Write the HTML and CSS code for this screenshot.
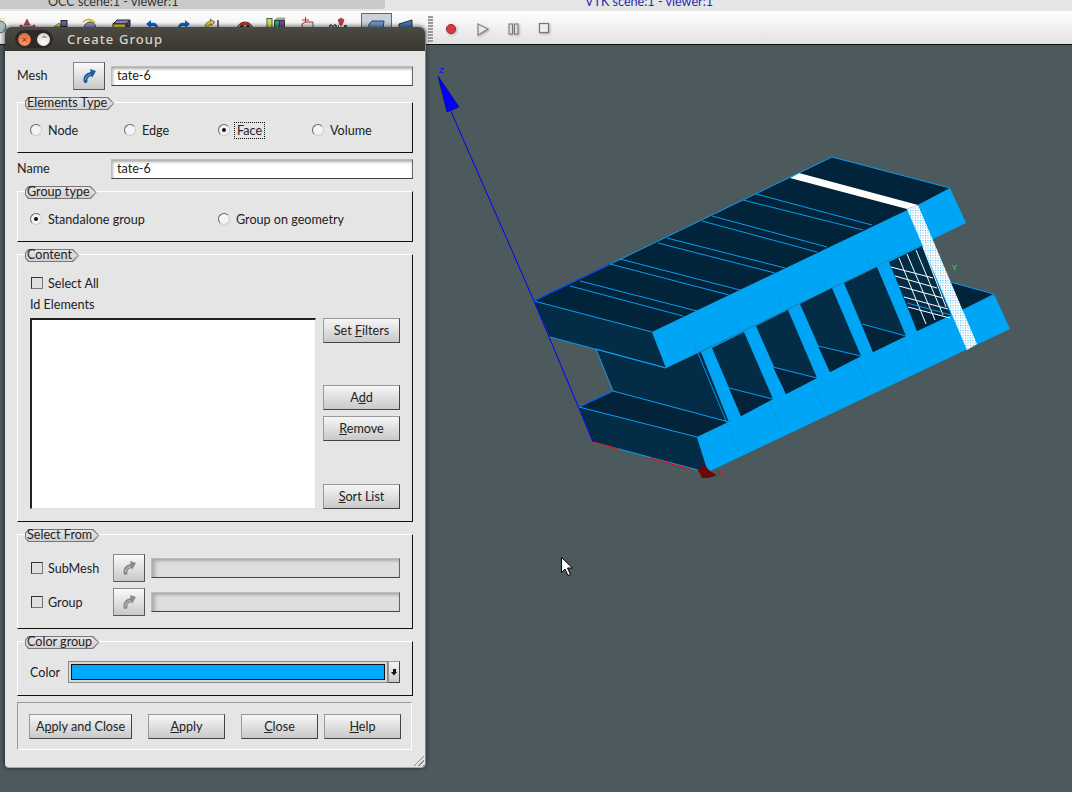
FILE: index.html
```html
<!DOCTYPE html>
<html>
<head>
	<meta charset="UTF-8">
	<title>Create Group</title>
	<link rel="stylesheet" href="styles.css">
</head>
<body>
	<div class="app">
		<div class="tabs">
			<div class="tab-occ">OCC scene:1 - viewer:1</div>
			<div class="tab-vtk">VTK scene:1 - viewer:1</div>
		</div>
		<div class="toolbar">
			<svg class="tools-left" width="425" height="33" viewBox="0 11 425 33">
				<rect x="361.500" y="13.500" width="30" height="31" fill="#c9d1d9" stroke="#666"/>
				<path d="M0 19h5v2" fill="none" stroke="#e8e020" stroke-dasharray="2 1"/>
				<circle cx="0" cy="27" r="6" fill="#a8bcc0" stroke="#556"/>
				<path d="M24 25l3-6 3 6z" fill="#c83a40" stroke="#733" stroke-width=".6"/>
				<path d="M22 26h10l3 3H20z" fill="#a0a0a8" stroke="#666" stroke-width=".6"/>
				<circle cx="21" cy="26" r="1.500" fill="#c83a40"/>
				<circle cx="34" cy="26" r="1.500" fill="#c83a40"/>
				<path d="M54 27l5-4 3 4z" fill="#e0cc20" stroke="#444" stroke-width=".6"/>
				<rect x="61" y="20.500" width="6" height="6" fill="#56708c" stroke="#223"/>
				<circle cx="90" cy="28" r="6" fill="#9a8fc0" stroke="#445"/>
				<path d="M83 22c4-4 9-3 12 1" fill="none" stroke="#d8c030" stroke-width="2"/>
				<path d="M113 24l4-4h13l-4 4z" fill="#8a80b8" stroke="#223"/>
				<rect x="113" y="24" width="13" height="6" fill="#e6d820" stroke="#223"/>
				<path d="M126 24l4-4v6l-4 4z" fill="#4a4a70" stroke="#223"/>
				<path d="M158 28c0-4-3-6-7-5v-3l-5 4 5 4v-2c3 0 5 0 5 2z" fill="#0a64c8"/>
				<path d="M178 28c0-4 3-6 7-5v-3l5 4-5 4v-2c-3 0-5 0-5 2z" fill="#0a64c8"/>
				<path d="M205 28c0-4 2-7 6-7l-1-2 5 3-4 4v-2c-2 0-3 2-3 4z" fill="#e0c820" stroke="#333" stroke-width=".6"/>
				<path d="M218 20v8h6" fill="none" stroke="#222" stroke-width="1.300"/>
				<circle cx="245" cy="30" r="8" fill="#aaa" stroke="#333"/>
				<path d="M239 25a8 8 0 0 1 12 0z" fill="#c03028"/>
				<circle cx="242" cy="27" r="2" fill="#222"/>
				<circle cx="248" cy="27" r="2" fill="#222"/>
				<rect x="267" y="18.500" width="5" height="10" fill="#d8d870" stroke="#3a6a3a"/>
				<rect x="274.500" y="20.500" width="5" height="8" fill="#30a070" stroke="#333"/>
				<rect x="279.500" y="20.500" width="5" height="8" fill="#7a40a8" stroke="#333"/>
				<path d="M275 20l2-2h8l-1 2z" fill="#a8c8a0" stroke="#555" stroke-width=".5"/>
				<path d="M305.500 17v8M302 20h7" stroke="#d82020" fill="none"/>
				<path d="M302 24l3-2h8v6h-11z" fill="#e8e4e4" stroke="#844"/>
				<path d="M329 26h10M331 24v4M335 24v4" stroke="#245" fill="none" stroke-width="1.300" stroke-dasharray="2 1"/>
				<path d="M338 20l3-2 3 2-2 5h-2z" fill="#c83838" stroke="#622" stroke-width=".6"/>
				<path d="M344 25h3v3h-3z" fill="#456"/>
				<path d="M369 24l3-3h12l-1 8h-14z" fill="#6a98c4" stroke="#345"/>
				<path d="M399 24l13-4v7l-13 3z" fill="#4678ac" stroke="#234"/>
			</svg>
			<div class="handle"></div>
			<svg class="tools-right" width="120" height="33" viewBox="437 11 120 33">
				<circle cx="451" cy="29" r="4.600" fill="#d83a40" stroke="#933"/>
				<path d="M478 24l10 5-10 6z" fill="#e8e8e8" stroke="#888" stroke-width="1.300"/>
				<rect x="509" y="24" width="3.500" height="10" fill="#ddd" stroke="#777"/>
				<rect x="514.500" y="24" width="3.500" height="10" fill="#ddd" stroke="#777"/>
				<rect x="539.500" y="23.500" width="9" height="9" fill="#eee" stroke="#777" stroke-width="1.200"/>
			</svg>
		</div>
		<div class="viewer">
			<svg class="scene" width="1072" height="747" viewBox="0 45 1072 747">
				<defs>
					<pattern id="dots" width="2.500" height="2.500" patternUnits="userSpaceOnUse">
						<rect width="2.500" height="2.500" fill="#fff"/>
						<rect width="1" height="1" fill="#3ab4f5"/>
					</pattern>
				</defs>
				<!-- lower flange -->
				<polygon points="579,407 697,437 708,472 593,442" fill="#032c46"/>
				<polygon points="579,407 613,391 729,422 697,437" fill="#02233a"/>
				<polygon points="950,282 994,294 962,310" fill="#01243a"/>
				<!-- web -->
				<polygon points="596,349 666,368 701,352 729,422 613,391" fill="#032c46"/>
				<!-- upper flange -->
				<polygon points="534,301 832,157 950,188 918,205 652,332" fill="#01243a"/>
				<polygon points="534,301 652,332 666,368 550,337" fill="#032c46"/>
				<!-- bright side with the windows -->
				<polygon points="652,332 918,205 950,188 966,223 666,368" fill="#00a6f5"/>
				<polygon points="697,437 962,310 994,294 1010,329 708,472" fill="#00a6f5"/>
				<polygon points="701,352 925,243 955,318 729,422" fill="#00a6f5"/>
				<!-- rib shading, the windows cover most of it -->
				<g stroke="#0098ea" fill="none">
					<path d="M692 339l47 113M735 319l47 113M778 298l47 113M822 277l47 113M866 256l47 113"/>
				</g>
				<polygon points="712,348 744,332 773,399 741,416" fill="#032c46"/>
				<polygon points="729,388 773,399 741,416" fill="#02233a"/>
				<polygon points="756,326 788,310 817,378 786,394" fill="#032c46"/>
				<polygon points="773,367 817,378 786,394" fill="#02233a"/>
				<polygon points="800,304 832,288 861,356 830,372" fill="#032c46"/>
				<polygon points="818,346 861,356 830,372" fill="#02233a"/>
				<polygon points="844,283 877,267 906,336 873,352" fill="#032c46"/>
				<polygon points="862,324 906,336 873,352" fill="#02233a"/>
				<polygon points="889,262 922,246 951,315 917,331" fill="#032c46"/>
				<polygon points="907,303 951,315 917,331" fill="#02233a"/>
				<!-- mesh lines on the selected faces -->
				<g stroke="#fff" fill="none">
					<path d="M891 267l42 11M895 276l42 12M899 286l44 12M904 297l44 12M908 307l42 11"/>
					<path d="M899 258l27 66M907 254l28 66M916 250l27 65M923 247l23 60"/>
				</g>
				<polygon points="790,178 799,173 918,205 907,209" fill="#fff"/>
				<polygon points="907,209 918,205 977,344 967,350" fill="url(#dots)"/>
				<!-- thin edges -->
				<g stroke="#0a9cf0" fill="none">
					<path d="M534 301L652 332M550 337L666 368M596 349L666 368M596 349L613 391M613 391L729 422M579 407L697 437M593 442L697 470M579 407L613 391"/>
					<path d="M832 157L950 188M832 157L534 301"/>
					<path d="M570 286L683 316M580 281L697 311M610 264L729 295M620 259L740 290M658 243L775 273M667 238L785 268M702 221L817 252M712 216L827 247M743 200L863 230M756 194L872 225"/>
					<path d="M729 388L773 399M773 367L817 378M818 346L861 356M862 324L906 336"/>
					<path d="M950 282L994 294M907 303L951 315"/>
				</g>
				<!-- axes -->
				<g fill="none">
					<path d="M446 100L534 301L593 442" stroke="#0000ff"/>
					<path d="M534 301L610 264" stroke="#0030ff"/>
					<path d="M579 407L613 391" stroke="#0050ff"/>
					<path d="M593 442L618 449M650 458L690 469" stroke="#ff0000"/>
					<path d="M947 272l2-1" stroke="#00a000"/>
				</g>
				<polygon points="438,76 459,107 447,112" fill="#0000ff" stroke="#000080" stroke-width=".6"/>
				<text class="axis-label" x="439" y="73" fill="#0000ff">Z</text>
				<path d="M698 470l6-5 6 6 7 4-8 3h-7z" fill="#6c0808"/>
				<text class="axis-label" x="718" y="476" fill="#ff0000">X</text>
				<text class="axis-label" x="952" y="270" fill="#00ff00">Y</text>
				<!-- mouse pointer -->
				<path d="M561.500 557.500v15l3.500-3.500 3 6.500 2.500-1-3-6.500h5z" fill="#fff" stroke="#000"/>
			</svg>
		</div>

		<div class="dialog">
			<div class="titlebar">
				<div class="win-buttons">
					<span class="win-close">×</span>
					<span class="win-shade">⌃</span>
				</div>
				<div class="title">Create Group</div>
			</div>
			<div class="content">
				<div class="mesh-row">
					<span class="field-label">Mesh</span>
					<button class="icon-btn">
						<svg width="16" height="16" viewBox="0 0 16 16"><path d="M4.500 13C4 9.500 6 7 10 6" fill="none" stroke="#1f5a99" stroke-width="4" stroke-linecap="round"/><path d="M9 1l6 2-4 7z" fill="#1f5a99"/><path d="M4.500 12C4.500 9.500 6 7.500 9.500 6.500" fill="none" stroke="#6ab0ee"/></svg>
					</button>
					<div class="text-input">tate-6</div>
				</div>

				<div class="frame frame-type">
					<span class="tag">Elements Type</span>
					<div class="radio-row four">
						<label class="opt"><i class="radio"></i>Node</label>
						<label class="opt"><i class="radio"></i>Edge</label>
						<label class="opt"><i class="radio on"></i><span class="focused">Face</span></label>
						<label class="opt"><i class="radio"></i>Volume</label>
					</div>
				</div>

				<div class="name-row">
					<span class="field-label">Name</span>
					<div class="text-input">tate-6</div>
				</div>

				<div class="frame frame-group">
					<span class="tag">Group type</span>
					<div class="radio-row two">
						<label class="opt"><i class="radio on"></i>Standalone group</label>
						<label class="opt"><i class="radio"></i>Group on geometry</label>
					</div>
				</div>

				<div class="frame frame-content">
					<span class="tag">Content</span>
					<label class="opt"><i class="check"></i>Select All</label>
					<div class="id-label">Id Elements</div>
					<div class="list-area">
						<div class="list-box"></div>
						<div class="list-buttons">
							<button class="btn">Set <u>F</u>ilters</button>
							<button class="btn btn-add">A<u>d</u>d</button>
							<button class="btn btn-remove"><u>R</u>emove</button>
							<button class="btn btn-sort"><u>S</u>ort List</button>
						</div>
					</div>
				</div>

				<div class="frame frame-select">
					<span class="tag">Select From</span>
					<div class="select-row">
						<label class="opt"><i class="check"></i>SubMesh</label>
						<button class="icon-btn off">
							<svg width="16" height="16" viewBox="0 0 16 16"><path d="M4.500 13C4 9.500 6 7 10 6" fill="none" stroke="#8a8a8a" stroke-width="4" stroke-linecap="round"/><path d="M9 1l6 2-4 7z" fill="#8a8a8a"/><path d="M4.500 12C4.500 9.500 6 7.500 9.500 6.500" fill="none" stroke="#ccc"/></svg>
						</button>
						<div class="text-input off"></div>
					</div>
					<div class="select-row">
						<label class="opt"><i class="check"></i>Group</label>
						<button class="icon-btn off">
							<svg width="16" height="16" viewBox="0 0 16 16"><path d="M4.500 13C4 9.500 6 7 10 6" fill="none" stroke="#8a8a8a" stroke-width="4" stroke-linecap="round"/><path d="M9 1l6 2-4 7z" fill="#8a8a8a"/><path d="M4.500 12C4.500 9.500 6 7.500 9.500 6.500" fill="none" stroke="#ccc"/></svg>
						</button>
						<div class="text-input off"></div>
					</div>
				</div>

				<div class="frame frame-color">
					<span class="tag">Color group</span>
					<div class="color-row">
						<span class="color-label">Color</span>
						<div class="color-box"><div class="color-fill"></div></div>
						<div class="color-arrow"></div>
					</div>
				</div>

				<div class="footer">
					<button class="btn btn-wide">A<u>p</u>ply and Close</button>
					<button class="btn btn-apply"><u>A</u>pply</button>
					<button class="btn btn-close"><u>C</u>lose</button>
					<button class="btn btn-help"><u>H</u>elp</button>
				</div>
			</div>
			<div class="grip"></div>
		</div>
	</div>
</body>
</html>
```

FILE: styles.css
```css
* {
	margin: 0;
	padding: 0;
	box-sizing: border-box;
}

body {
	background: #4c5a5e;
	font-family: "Lato", "Liberation Sans", sans-serif;
	font-size: 12.6px;
	color: #222;
	overflow: hidden;
}

.app {
	position: relative;
	width: 1072px;
	height: 792px;
	display: flex;
	flex-direction: column;
}

/* top of the main window */
.tabs {
	height: 11px;
	display: flex;
	background: #e6e6e6;
	overflow: hidden;
}

.tab-occ {
	width: 385px;
	height: 9px;
	padding-left: 48px;
	background: #c9c9c9;
	border-radius: 0 0 3px 0;
	line-height: 4px;
	color: #333;
}

.tab-vtk {
	padding-left: 200px;
	line-height: 4px;
	color: #2c2ca8;
}

.toolbar {
	height: 34px;
	display: flex;
	align-items: flex-start;
	background: linear-gradient(#fff, #e2e2e2);
	border-bottom: 1px solid #111;
}

.handle {
	width: 5px;
	height: 26px;
	margin: 5px 0 0 3px;
	background: repeating-linear-gradient(#999 0 2px, #eee 2px 3px);
}

.tools-right {
	margin-left: 4px;
	filter: drop-shadow(1px 1px 1px #aaa);
}

.viewer {
	flex: 1;
	background: #4c5a5e;
}

.scene {
	display: block;
}

.axis-label {
	font-family: "Liberation Sans", sans-serif;
	font-size: 8px;
}

/* dialog */
.dialog {
	position: absolute;
	left: 5px;
	top: 27px;
	width: 420px;
	height: 740px;
	display: flex;
	flex-direction: column;
	background: #e5e5e5;
	border-radius: 6px 6px 4px 4px;
	box-shadow: 1px 0 0 #8a8672, 0 1px 0 #b0aa90, 0 0 4px 1px rgba(0, 0, 0, .55);
}

.titlebar {
	height: 24px;
	display: flex;
	align-items: center;
	background: linear-gradient(#4c4a44, #38362f);
	border-radius: 6px 6px 0 0;
}

.win-buttons {
	width: 38px;
	height: 18px;
	margin-left: 10px;
	display: flex;
	align-items: center;
	justify-content: space-between;
	padding: 0 3px;
	background: #2b2a26;
	border-radius: 9px;
}

.win-close, .win-shade {
	width: 13px;
	height: 13px;
	border-radius: 50%;
	text-align: center;
	line-height: 12px;
	font-size: 10px;
	color: #6b3018;
}

.win-close {
	background: radial-gradient(circle at 50% 70%, #ff9a6a, #e0592a);
}

.win-shade {
	background: radial-gradient(circle at 50% 70%, #fff, #cfcbc0);
	color: #666;
}

.title {
	margin-left: 14px;
	font-family: "Noto Sans", sans-serif;
	font-size: 13px;
	font-weight: 500;
	letter-spacing: 1.1px;
	color: #d9d5c8;
}

.content {
	display: flex;
	flex-direction: column;
	padding: 0 12px;
}

.mesh-row {
	height: 28px;
	margin-top: 11px;
	display: flex;
	align-items: center;
}

.mesh-row .field-label {
	width: 56px;
}

.mesh-row .text-input {
	margin-left: 6px;
	width: 302px;
}

.name-row {
	height: 20px;
	margin-top: 6px;
	display: flex;
	align-items: center;
}

.name-row .field-label {
	width: 94px;
}

.name-row .text-input {
	width: 302px;
}

.field-label {
	line-height: 19px;
	height: 20px;
}

.text-input {
	height: 20px;
	padding-left: 5px;
	line-height: 18px;
	background: #fff;
	border: 1px solid #bbb;
	border-bottom-color: #444;
	border-right-color: #666;
	box-shadow: inset 0 3px 3px -1px #aaa, inset 3px 0 3px -2px #bbb;
}

.text-input.off {
	width: 249px;
	background: #dedede;
	box-shadow: inset 0 3px 3px -1px #aaa, inset 6px 0 4px -3px #aaa;
}

.icon-btn {
	width: 32px;
	height: 28px;
	display: flex;
	align-items: center;
	justify-content: center;
	background: linear-gradient(#fafafa, #c8c8c8);
	border: 1px solid #888;
	border-bottom-color: #555;
	border-right-color: #555;
}

/* group boxes */
.frame {
	position: relative;
	display: flex;
	flex-direction: column;
	margin-top: 12px;
	padding: 0 12px;
	border: 1px solid #111;
	border-top-color: #fff;
	border-left-color: #fff;
}

/* label on the frame, a tab with a pointed right end */
.tag {
	position: absolute;
	left: 7px;
	top: -6px;
	height: 13px;
	padding: 0 7px 0 2px;
	line-height: 12px;
	color: #222;
	z-index: 0;
}

.tag::before, .tag::after {
	content: "";
	position: absolute;
	z-index: -1;
}

.tag::before {
	inset: 0;
	background: #777;
	clip-path: polygon(3px 0, calc(100% - 6px) 0, 100% 50%, calc(100% - 6px) 100%, 3px 100%, 0 70%, 0 30%);
}

.tag::after {
	inset: 1px;
	background: linear-gradient(#e6e6e6, #d0d0d0);
	clip-path: polygon(3px 0, calc(100% - 6px) 0, 100% 50%, calc(100% - 6px) 100%, 3px 100%, 0 70%, 0 30%);
}

.frame-type {
	height: 51px;
	padding-top: 20px;
}

.frame-group {
	height: 51px;
	padding-top: 20px;
}

.frame-content {
	height: 268px;
	padding-top: 21px;
}

.frame-select {
	height: 95px;
	padding-top: 19px;
}

.frame-color {
	height: 55px;
	padding-top: 19px;
}

.radio-row {
	display: grid;
	height: 14px;
}

.radio-row.four {
	grid-template-columns: repeat(4, 94px);
}

.radio-row.two {
	grid-template-columns: repeat(2, 188px);
}

.opt {
	display: flex;
	align-items: center;
	height: 14px;
}

.radio {
	width: 12px;
	height: 12px;
	margin-right: 6px;
	border-radius: 50%;
	background: #f4f4f4;
	border: 1px solid #666;
	border-bottom-color: #ccc;
	border-right-color: #ccc;
	display: flex;
	align-items: center;
	justify-content: center;
}

.radio.on::after {
	content: "";
	width: 4px;
	height: 4px;
	border-radius: 50%;
	background: #111;
}

.check {
	width: 12px;
	height: 12px;
	margin: 0 5px 0 1px;
	background: #e0e0e0;
	border: 1px solid #333;
	border-bottom-color: #777;
	border-right-color: #777;
}

.focused {
	margin-left: -1px;
	padding: 0 2px;
	outline: 1px dotted #111;
}

.id-label {
	height: 14px;
	margin-top: 8px;
	line-height: 14px;
}

.list-area {
	display: flex;
	margin-top: 6px;
	height: 191px;
}

.list-box {
	width: 286px;
	background: #fff;
	border: 1px solid #ddd;
	border-top: 2px solid #222;
	border-left: 2px solid #222;
}

.list-buttons {
	width: 77px;
	margin-left: 7px;
	display: flex;
	flex-direction: column;
}

.btn {
	height: 25px;
	font-family: inherit;
	font-size: 12.6px;
	color: #222;
	background: linear-gradient(#f6f6f6, #c9c9c9);
	border: 1px solid #999;
	border-bottom-color: #444;
	border-right-color: #444;
}

.btn-add {
	margin-top: 42px;
}

.btn-remove {
	margin-top: 6px;
}

.btn-sort {
	margin-top: auto;
}

.select-row {
	height: 28px;
	display: grid;
	grid-template-columns: 83px 32px 255px;
	align-items: center;
}

.select-row .text-input {
	margin-left: 6px;
	width: 249px;
}

.select-row + .select-row {
	margin-top: 6px;
}

.color-row {
	height: 22px;
	display: flex;
	align-items: center;
}

.color-label {
	width: 38px;
}

.color-box {
	width: 320px;
	height: 22px;
	padding: 2px;
	background: #d8d8d8;
	border: 1px solid #888;
}

.color-fill {
	height: 100%;
	background: #00aaff;
	border: 1px solid #111;
}

.color-arrow {
	width: 12px;
	height: 22px;
	background: linear-gradient(#f4f4f4, #c8c8c8);
	border: 1px solid #999;
	border-bottom-color: #444;
	border-right-color: #444;
	display: flex;
	flex-direction: column;
	align-items: center;
	justify-content: center;
}

.color-arrow::before {
	content: "";
	width: 3px;
	height: 3px;
	flex: none;
	background: #111;
}

.color-arrow::after {
	content: "";
	width: 7px;
	height: 4px;
	flex: none;
	background: #111;
	clip-path: polygon(0 0, 100% 0, 50% 100%);
}

.footer {
	width: 395px;
	height: 48px;
	margin-top: 6px;
	display: flex;
	align-items: center;
	padding-left: 11px;
	border: 1px solid #fff;
	border-top-color: #999;
	border-left-color: #999;
}

.btn-wide {
	width: 103px;
}

.btn-apply, .btn-close, .btn-help {
	width: 77px;
}

.btn-apply, .btn-close {
	margin-left: 16px;
}

.btn-help {
	margin-left: 6px;
}

.grip {
	position: absolute;
	right: 1px;
	bottom: 1px;
	width: 13px;
	height: 13px;
	background: repeating-linear-gradient(135deg, transparent 0 2px, #888 2px 3px);
	clip-path: polygon(100% 0, 100% 100%, 0 100%);
}
```
